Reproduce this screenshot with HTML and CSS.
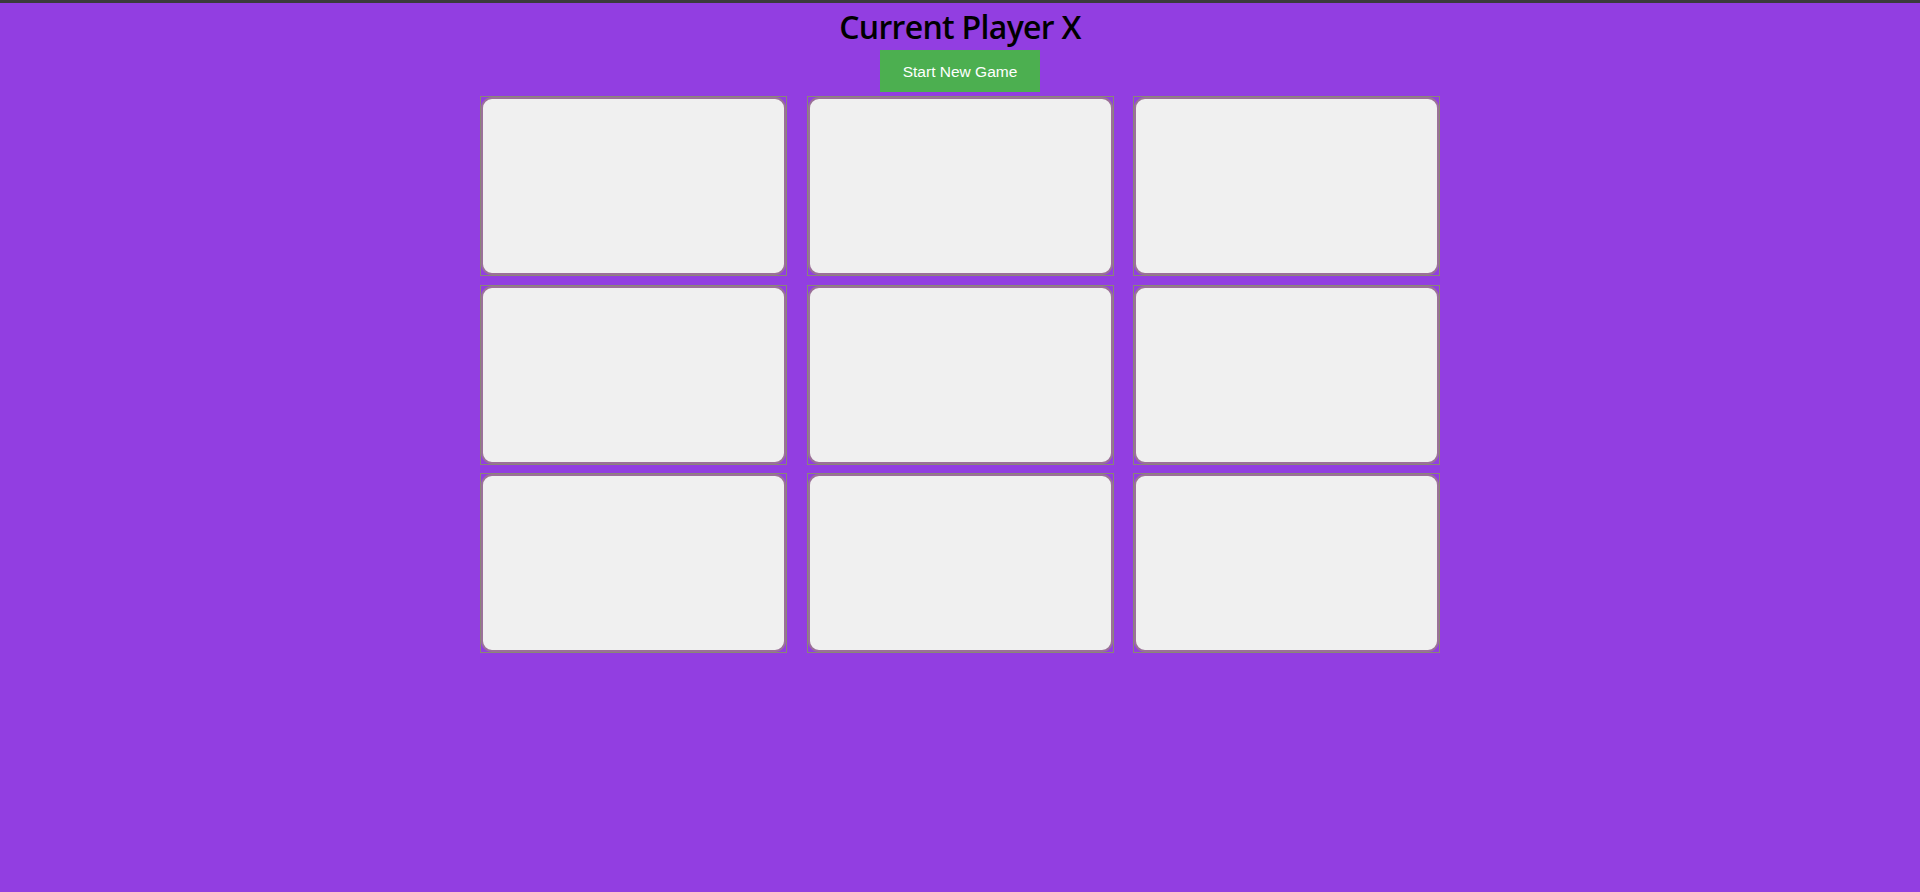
FILE: index.html
```html
<!DOCTYPE html>
<html>
<head>
<meta charset="utf-8">
<title>Tic Tac Toe</title>
<link rel="stylesheet" href="styles.css">
</head>
<body>
<div class="page">
  <h1 class="title">Current Player X</h1>
  <button class="start-btn">Start New Game</button>
  <div class="board">
    <div class="cell"><div class="tile"></div></div>
    <div class="cell"><div class="tile"></div></div>
    <div class="cell"><div class="tile"></div></div>
    <div class="cell"><div class="tile"></div></div>
    <div class="cell"><div class="tile"></div></div>
    <div class="cell"><div class="tile"></div></div>
    <div class="cell"><div class="tile"></div></div>
    <div class="cell"><div class="tile"></div></div>
    <div class="cell"><div class="tile"></div></div>
  </div>
</div>
</body>
</html>
```
FILE: styles.css
```css
html, body {
  margin: 0;
  padding: 0;
  height: 100%;
}
body {
  background: #923ee1;
  border-top: 3px solid #3b3b3b;
  box-sizing: border-box;
  font-family: "Liberation Sans", Arial, sans-serif;
}
.page {
  display: flex;
  flex-direction: column;
  align-items: center;
}
.title {
  margin: 0;
  font-family: "Open Sans", "Noto Sans", sans-serif;
  font-weight: 600;
  font-size: 32px;
  line-height: 48px;
  height: 47px;
  color: #000;
  letter-spacing: -0.7px;
}
.start-btn {
  background: #4caf50;
  color: #fff;
  border: none;
  font-family: "Liberation Sans", Arial, sans-serif;
  font-size: 15.5px;
  line-height: 18px;
  padding: 13px 20px 11px;
  white-space: nowrap;
  width: 160px;
  margin: 0 0 4px 0;
  cursor: pointer;
}
.board {
  display: grid;
  width: 960px;
  grid-template-columns: repeat(3, 307px);
  grid-auto-rows: 180px;
  column-gap: 19.5px;
  row-gap: 8.5px;
}
.cell {
  border: 1px solid #8a8676;
  display: flex;
}
.tile {
  flex: 1;
  border: 2px solid #9b7099;
  border-radius: 11px;
  background: #f0f0f0;
}
```
